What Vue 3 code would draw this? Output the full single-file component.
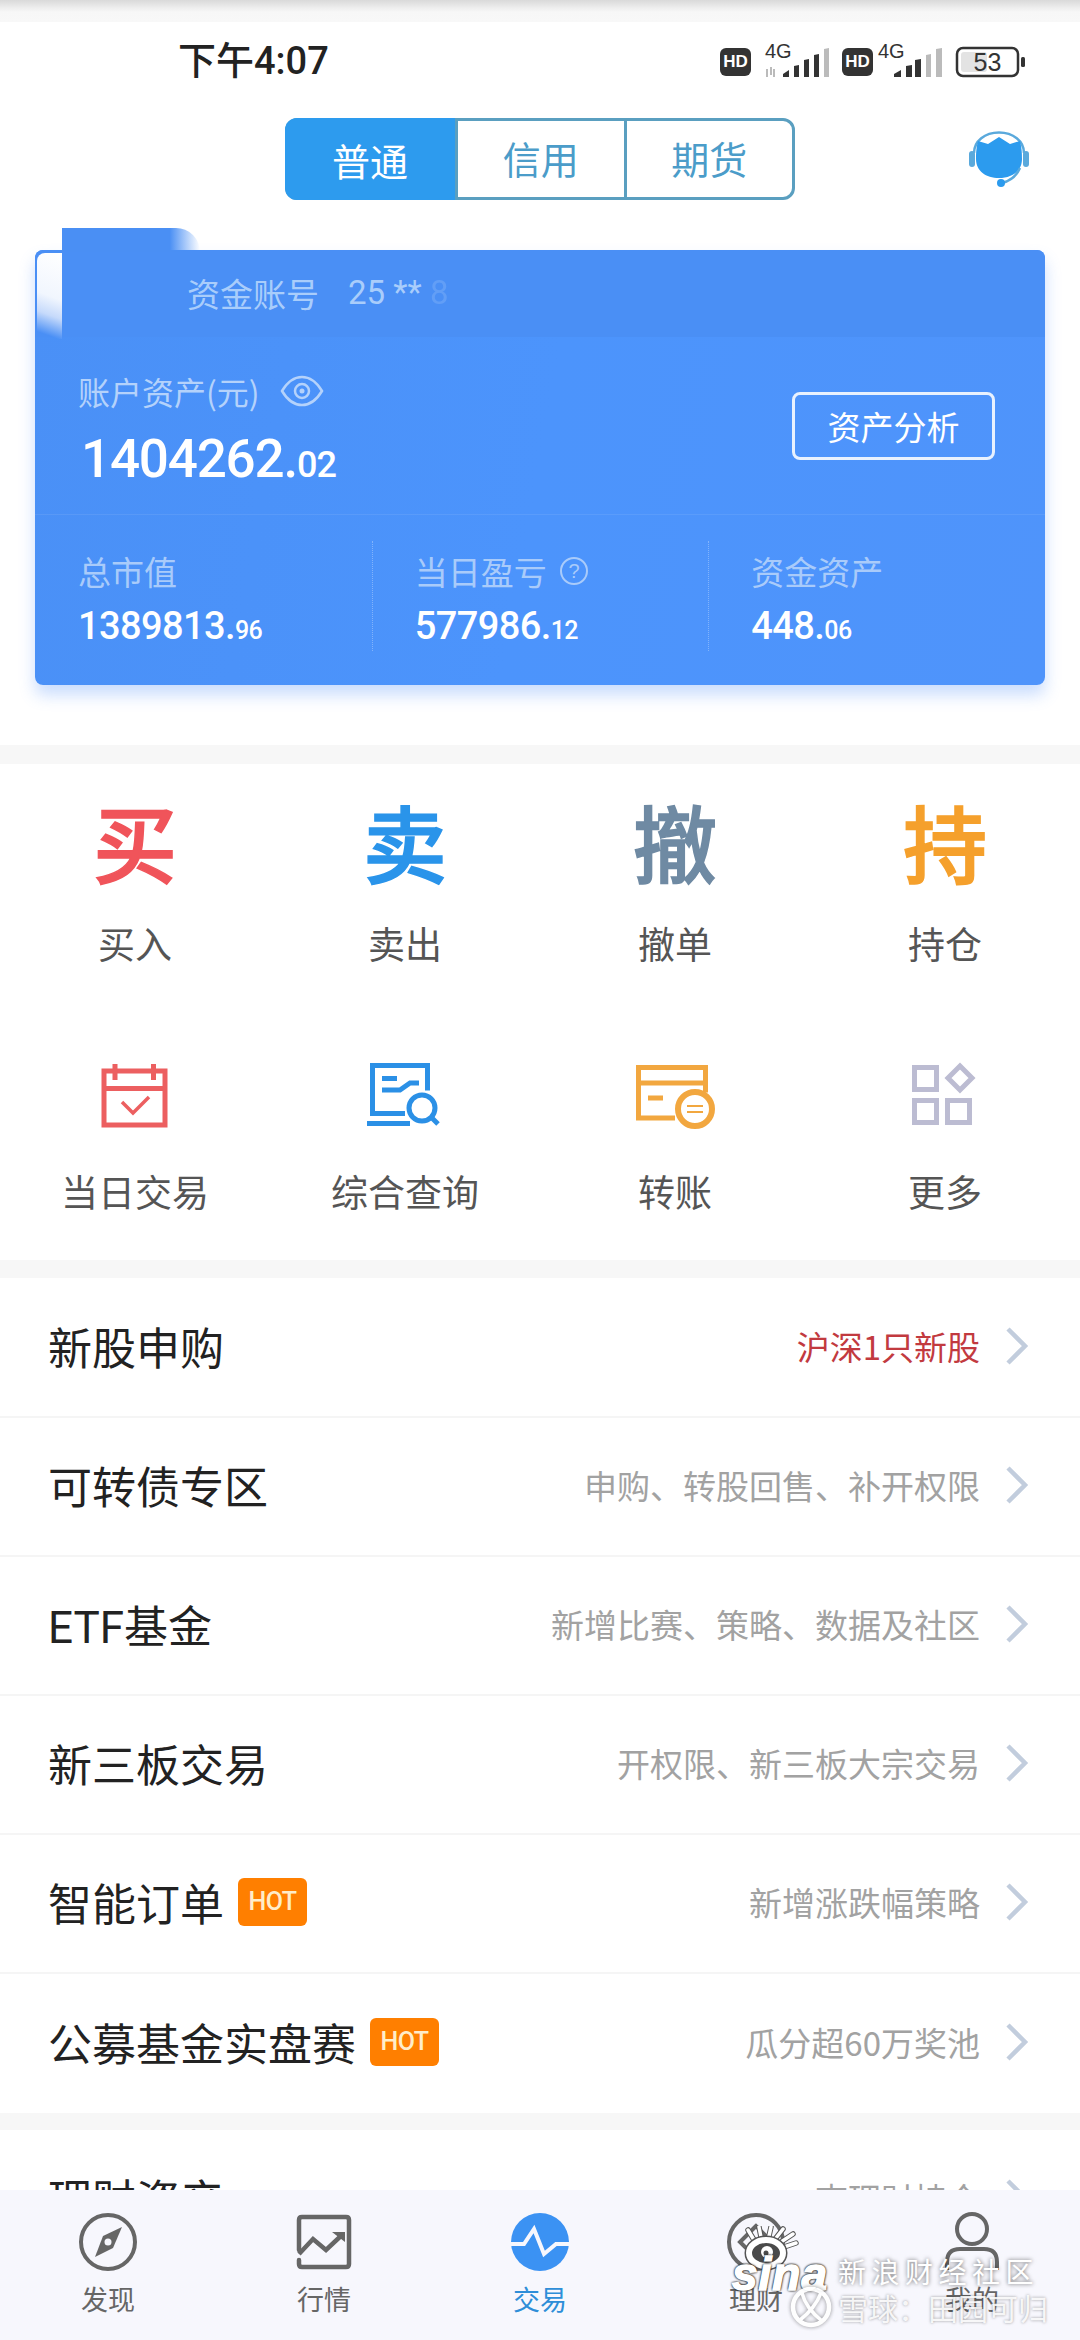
<script setup>
const stats = [
  { label: '总市值', int: '1389813.', dec: '96', help: false },
  { label: '当日盈亏', int: '577986.', dec: '12', help: true },
  { label: '资金资产', int: '448.', dec: '06', help: false }
]
const bigActions = [
  { glyph: '买', label: '买入', tone: 'red' },
  { glyph: '卖', label: '卖出', tone: 'blue' },
  { glyph: '撤', label: '撤单', tone: 'slate' },
  { glyph: '持', label: '持仓', tone: 'orange' }
]
const rows = [
  { title: '新股申购', sub: '沪深1只新股', alert: true },
  { title: '可转债专区', sub: '申购、转股回售、补开权限' },
  { title: 'ETF基金', sub: '新增比赛、策略、数据及社区' },
  { title: '新三板交易', sub: '开权限、新三板大宗交易' },
  { title: '智能订单', sub: '新增涨跌幅策略', hot: true },
  { title: '公募基金实盘赛', sub: '瓜分超60万奖池', hot: true }
]
</script>

<template>
  <div class="phone">
    <div class="top-strip"></div>

    <div class="status">
      <span class="time">下午4:07</span>
      <svg class="status-icons" viewBox="715 35 315 45" width="315" height="45">
        <rect x="719" y="45" width="31" height="28" rx="6" fill="#333" />
        <text x="734.5" y="64" text-anchor="middle" class="hd">HD</text>
        <text x="764" y="55" class="net">4G</text>
        <path d="M766 66v8M770 64v8" stroke="#bbb" stroke-width="2" />
        <path d="M773 66v8" stroke="#bbb" stroke-width="2" />
        <path d="M782 74v-3l6-4v7zM793 74v-11l5-1v12zM803 74v-17l5-1v18zM813 74v-22l5-1v23z" fill="#333" />
        <path d="M823 74v-28l5-1v29z" fill="#bbb" />
        <rect x="841" y="45" width="31" height="28" rx="6" fill="#333" />
        <text x="856.5" y="64" text-anchor="middle" class="hd">HD</text>
        <text x="877" y="55" class="net">4G</text>
        <path d="M893 74v-3l7-4v7zM905 74v-11l6-1v12zM914 74v-17l6-1v18z" fill="#333" />
        <path d="M925 74v-22l5-1v23zM935 74v-28l6-1v29z" fill="#bbb" />
        <rect x="956" y="45" width="61" height="28" rx="6" fill="#fff" stroke="#333" stroke-width="2.5" />
        <rect x="960" y="49" width="26" height="20" rx="3" fill="#e3e3e3" />
        <text x="986.5" y="68" text-anchor="middle" class="batt">53</text>
        <rect x="1020" y="54" width="4" height="10" rx="1.5" fill="#333" />
      </svg>
    </div>

    <div class="header">
      <div class="tabs">
        <span class="tab on">普通</span>
        <span class="tab">信用</span>
        <span class="tab">期货</span>
      </div>
      <svg class="support" viewBox="0 0 62 58" width="62" height="58">
        <path d="M6 22C6 10 17 1.500 31 1.500S56 10 56 22" fill="none" stroke="#5aa9dc" stroke-width="2.500" />
        <rect x="1" y="20" width="6" height="16" rx="3" fill="#5aa9dc" />
        <rect x="55" y="20" width="6" height="16" rx="3" fill="#5aa9dc" />
        <path d="M10 10l10 3 11-7 11 7 10-3c2 8 2 14 2 18 0 12-10 19-23 19S8 40 8 28c0-4 0-10 2-18z" fill="#2c9bee" />
        <path d="M52 37c-4 9-10 13-18 15" fill="none" stroke="#5aa9dc" stroke-width="2.500" />
        <circle cx="33" cy="52" r="4" fill="#2c9bee" />
      </svg>
    </div>

    <section class="card">
      <div class="bump"></div>
      <div class="left-mask"></div>
      <div class="account">
        <span class="account-label">资金账号</span>
        <span class="account-no">25 ** <i class="faded">8</i></span>
      </div>
      <div class="assets">
        <div>
          <div class="assets-label">
            <span>账户资产(元)</span>
            <svg viewBox="0 0 44 32" width="44" height="32">
              <path d="M2 16C8 6 15 2 22 2s14 4 20 14c-6 10-13 14-20 14S8 26 2 16z" fill="none" stroke="#b4d2fb" stroke-width="2.500" />
              <circle cx="22" cy="16" r="7" fill="none" stroke="#b4d2fb" stroke-width="2.500" />
              <circle cx="22" cy="16" r="2.500" fill="#b4d2fb" />
            </svg>
          </div>
          <div class="assets-value">1404262.<small>02</small></div>
        </div>
        <button class="analyse">资产分析</button>
      </div>
      <div class="stats">
        <div v-for="s in stats" :key="s.label" class="stat">
          <div class="stat-label">
            <span>{{ s.label }}</span>
            <svg v-if="s.help" viewBox="0 0 30 30" width="30" height="30">
              <circle cx="15" cy="15" r="13" fill="none" stroke="#a9cbfa" stroke-width="2" />
              <text x="15" y="22" text-anchor="middle" class="help">?</text>
            </svg>
          </div>
          <div class="stat-value">{{ s.int }}<small>{{ s.dec }}</small></div>
        </div>
      </div>
    </section>

    <div class="main">
      <div class="band first"></div>

      <section class="grid">
        <div v-for="a in bigActions" :key="a.label" class="cell">
          <div class="icon-box"><span class="glyph" :class="a.tone">{{ a.glyph }}</span></div>
          <div class="cell-label">{{ a.label }}</div>
        </div>

        <div class="cell">
          <div class="icon-box">
            <svg viewBox="90 1050 90 90" width="90" height="90" fill="none" stroke="#ec5f60" stroke-width="5">
              <rect x="104" y="1071" width="61" height="54" />
              <path d="M104 1088.500h61M115 1064v16M153.500 1064v16" />
              <path d="M122 1102l11 11 16-16" stroke-width="3.500" />
            </svg>
          </div>
          <div class="cell-label">当日交易</div>
        </div>
        <div class="cell">
          <div class="icon-box">
            <svg viewBox="360 1050 90 90" width="90" height="90" fill="none" stroke="#2b90e6" stroke-width="5">
              <path d="M405 1113.500h-32.500v-48h55v25" />
              <path d="M367 1123.500h43" />
              <path d="M382 1078.500h15M382 1090h18l10-7h9" />
              <circle cx="422" cy="1108" r="13" />
              <path d="M431 1117l7 7" />
            </svg>
          </div>
          <div class="cell-label">综合查询</div>
        </div>
        <div class="cell">
          <div class="icon-box">
            <svg viewBox="630 1050 90 90" width="90" height="90" fill="none" stroke="#f2a73f" stroke-width="5">
              <path d="M675 1118h-36.500v-50.500h67v25" />
              <path d="M638.500 1083h67M648 1098h15" />
              <circle cx="695" cy="1109" r="17" stroke-width="6" />
              <path d="M687 1106h16M687 1112h16" stroke-width="2" />
            </svg>
          </div>
          <div class="cell-label">转账</div>
        </div>
        <div class="cell">
          <div class="icon-box">
            <svg viewBox="900 1050 90 90" width="90" height="90" fill="none" stroke="#bcbcd2" stroke-width="5">
              <rect x="914.500" y="1067.500" width="22" height="22" />
              <path d="M960 1066l12 12-12 12-12-12z" />
              <rect x="914.500" y="1100.500" width="22" height="22" />
              <rect x="947.500" y="1100.500" width="22" height="22" />
            </svg>
          </div>
          <div class="cell-label">更多</div>
        </div>
      </section>

      <div class="band"></div>

      <section class="list">
        <div v-for="r in rows" :key="r.title" class="row">
          <span class="row-title">{{ r.title }}</span>
          <span v-if="r.hot" class="hot">HOT</span>
          <span class="row-sub" :class="{ alert: r.alert }">{{ r.sub }}</span>
          <svg class="chev" viewBox="0 0 26 38" width="26" height="38"><path d="M4 2l17 17L4 36" fill="none" stroke="#c2cddd" stroke-width="4.500" /></svg>
        </div>
      </section>

      <div class="band second"></div>

      <div class="row last">
        <span class="row-title">理财资产</span>
        <span class="row-sub">查理财持仓</span>
        <svg class="chev" viewBox="0 0 26 38" width="26" height="38"><path d="M4 2l17 17L4 36" fill="none" stroke="#c2cddd" stroke-width="4.500" /></svg>
      </div>
    </div>

    <nav class="tabbar">
      <div class="nav-item">
        <svg viewBox="0 0 60 60" width="60" height="60">
          <circle cx="30" cy="30" r="27" fill="none" stroke="#666" stroke-width="4" />
          <path d="M44 15L35 36 17 45l8-21z" fill="#666" />
          <circle cx="30" cy="30" r="3.500" fill="#f7f7fd" />
        </svg>
        <span>发现</span>
      </div>
      <div class="nav-item">
        <svg viewBox="0 0 60 60" width="60" height="60" fill="none" stroke="#666" stroke-width="4.500">
          <path d="M5 38V8q0-3 3-3h44q3 0 3 3v44q0 3-3 3H8q-3 0-3-3v-4" stroke-linecap="round" />
          <path d="M5 42l14-15 13 11 17-16" />
          <path d="M38 20h13v10z" fill="#666" stroke="none" />
        </svg>
        <span>行情</span>
      </div>
      <div class="nav-item active">
        <svg viewBox="0 0 60 60" width="60" height="60">
          <circle cx="30" cy="30" r="29" fill="#3b92f3" />
          <path d="M0 32h14l10-15 10 25 12-10h14" fill="none" stroke="#f7f7fd" stroke-width="4" />
        </svg>
        <span>交易</span>
      </div>
      <div class="nav-item">
        <svg viewBox="0 0 60 60" width="60" height="60" fill="none" stroke="#666" stroke-width="4">
          <circle cx="30" cy="30" r="27" />
          <path d="M30 14L14 30l16 16 16-16z" />
        </svg>
        <span>理财</span>
      </div>
      <div class="nav-item">
        <svg viewBox="0 0 60 60" width="60" height="60" fill="none" stroke="#666" stroke-width="4">
          <circle cx="30" cy="17" r="15" />
          <path d="M5 58V50q0-13 13-13h24q13 0 13 13v8" />
        </svg>
        <span>我的</span>
      </div>
    </nav>

    <div class="watermark">
      <svg class="sina-eye" viewBox="0 0 64 44" width="64" height="44" fill="none">
        <path d="M16 14L10 4M23 11L21 1M31 10L33 1M38 12L45 3M43 16L55 8M46 21L58 17" stroke="#555" stroke-width="5.500" stroke-linecap="round" />
        <path d="M16 14L10 4M23 11L21 1M31 10L33 1M38 12L45 3M43 16L55 8M46 21L58 17" stroke="#fff" stroke-width="3.500" stroke-linecap="round" />
        <ellipse cx="28" cy="27" rx="17" ry="13" fill="#4a4a4a" stroke="#555" stroke-width="9" />
        <ellipse cx="28" cy="27" rx="17" ry="13" fill="#4a4a4a" stroke="#fff" stroke-width="6" />
        <circle cx="29" cy="26" r="6" fill="#fff" />
        <circle cx="28" cy="27" r="2.500" fill="#4a4a4a" />
      </svg>
      <span class="sina">sina</span>
      <span class="wm-a">新浪财经社区</span>
      <svg class="xq" viewBox="0 0 44 44" width="44" height="44" fill="none" stroke="#fff" stroke-width="4.500">
        <circle cx="22" cy="22" r="18" />
        <path d="M13 8c3 12 10 20 20 28M32 8C28 18 20 28 11 35" stroke-width="3.500" />
      </svg>
      <span class="wm-b">雪球：田园可归</span>
    </div>
  </div>
</template>

<style>
html, body { margin: 0; background: #fff; }
</style>

<style scoped>
.phone {
  position: relative;
  width: 1080px;
  height: 2340px;
  display: flex;
  flex-direction: column;
  overflow: hidden;
  background: #fff;
  font-family: "Noto Sans CJK SC", "Noto Sans", sans-serif;
  color: #222;
}
.top-strip {
  height: 22px;
  flex: none;
  background: linear-gradient(#d9d9d9 0, #eee 8px, #f7f7f7 12px, #f8f8f8 100%);
}
.status {
  height: 76px;
  flex: none;
  display: flex;
  align-items: center;
  padding: 0 49px 0 178px;
  justify-content: space-between;
  box-sizing: border-box;
}
.time { font: 500 38px/76px "Roboto", "Noto Sans CJK SC", sans-serif; margin-top: 2px; }
.status-icons { display: block; }
.hd { font: 700 17px "Liberation Sans", sans-serif; fill: #fff; }
.net { font: 400 20px "Liberation Sans", sans-serif; fill: #333; }
.batt { font: 400 25px "Liberation Sans", sans-serif; fill: #333; }

.header {
  position: relative;
  margin-top: 20px;
  height: 82px;
  flex: none;
  display: flex;
  justify-content: center;
}
.tabs {
  display: flex;
  width: 510px;
  height: 82px;
  box-sizing: border-box;
  border: 3px solid #5a9fc0;
  border-radius: 12px;
}
.tab {
  flex: 1;
  display: flex;
  align-items: center;
  justify-content: center;
  padding-bottom: 4px;
  font-size: 38px;
  color: #4b9cc9;
  border-left: 3px solid #5a9fc0;
}
.tab.on {
  background: #2d9bee;
  color: #fff;
  border-left: 0;
  margin: -3px 0 -3px -3px;
  flex: 0 0 170px;
  padding-bottom: 0;
  border-radius: 12px 0 0 12px;
}
.support { position: absolute; left: 968px; top: 13px; }

.card {
  position: relative;
  flex: none;
  margin: 50px 35px 0;
  height: 435px;
  border-radius: 8px;
  background: linear-gradient(100deg, #4a90f6, #4c94fc 50%, #4f94fb);
  box-shadow: 0 10px 16px rgba(90, 150, 250, 0.32);
  color: #fff;
}
.bump {
  position: absolute;
  left: 27px;
  top: -22px;
  width: 138px;
  height: 24px;
  background: linear-gradient(to right, #4a8ff4 78%, rgba(74, 143, 244, 0));
  border-top-right-radius: 30px;
}
.left-mask {
  position: absolute;
  left: 2px;
  top: 3px;
  width: 25px;
  height: 86px;
  background: linear-gradient(200deg, #fff 0, #f1f6fe 50%, #c6dafb 70%, rgba(200, 220, 251, 0) 92%);
  border-top-left-radius: 8px;
}
.account {
  height: 87px;
  box-sizing: border-box;
  padding: 0 0 2px 152px;
  display: flex;
  align-items: center;
  background: #4a8ff5;
  border-radius: 8px 8px 0 0;
}
.account-label { font-size: 33px; color: #a9cdfb; }
.account-no { margin-left: 29px; font: 400 33px "Roboto", sans-serif; color: #a9cdfb; }
.faded { font-style: normal; opacity: 0.25; }
.assets {
  height: 178px;
  box-sizing: border-box;
  padding: 36px 50px 0 43px;
  display: flex;
  justify-content: space-between;
  border-bottom: 1px solid rgba(255, 255, 255, 0.08);
}
.assets-label {
  display: flex;
  align-items: center;
  gap: 20px;
  height: 36px;
  font-size: 32px;
  color: #b4d2fb;
}
.assets-value {
  margin-top: 19px;
  font: 500 53px/62px "Roboto", sans-serif;
  letter-spacing: -1.2px;
  padding-left: 3px;
}
.assets-value small { font-size: 36px; letter-spacing: -1px; }
.analyse {
  margin-top: 19px;
  width: 203px;
  height: 68px;
  border: 3px solid #e8f1fe;
  border-radius: 8px;
  background: transparent;
  color: #fff;
  font: 400 33px "Noto Sans CJK SC", sans-serif;
  padding: 0;
}
.stats { display: flex; height: 170px; }
.stat {
  flex: 1;
  position: relative;
  padding: 38px 0 0 43px;
}
.stat + .stat::before {
  content: "";
  position: absolute;
  left: 0;
  top: 26px;
  height: 110px;
  border-left: 1px dotted rgba(255, 255, 255, 0.3);
}
.stat-label {
  display: flex;
  align-items: center;
  gap: 12px;
  height: 36px;
  font-size: 33px;
  color: #a9cbfa;
}
.help { font: 400 20px "Liberation Sans", sans-serif; fill: #a9cbfa; }
.stat-value {
  margin-top: 14px;
  font: 500 38px/46px "Roboto", sans-serif;
  letter-spacing: -0.6px;
}
.stat-value small { font-size: 25px; }

.main { flex: 1; min-height: 0; margin-top: 60px; overflow: hidden; }
.band { height: 18px; background: #f7f7f7; }
.band.first { height: 19px; }
.band.second { height: 17px; }
.list { padding-top: 1px; }
.grid {
  display: grid;
  grid-template-columns: repeat(4, 270px);
  grid-auto-rows: 248px;
}
.cell { padding-top: 41px; text-align: center; box-sizing: border-box; }
.icon-box { height: 84px; display: flex; align-items: center; justify-content: center; }
.icon-box svg { display: block; }
.glyph { font-size: 84px; line-height: 84px; font-weight: 500; margin-top: -12px; -webkit-text-stroke: 1.5px currentColor; }
.red { color: #f0545a; }
.blue { color: #2a94ea; }
.slate { color: #6f8aa3; }
.orange { color: #f5a02c; }
.cell-label { margin-top: 29px; font-size: 37px; line-height: 50px; color: #555; }

.row {
  height: 139px;
  box-sizing: border-box;
  display: flex;
  align-items: center;
  padding: 0 50px 3px 48px;
  border-bottom: 2px solid #f5f5f5;
}
.row:last-child { border-bottom: 0; }
.row-title { font-size: 44px; color: #222; font-family: "Roboto", "Noto Sans CJK SC", sans-serif; }
.hot {
  margin-left: 14px;
  width: 69px;
  height: 48px;
  border-radius: 6px;
  background: #ff7f00;
  color: #ffedc9;
  font: 500 25px/48px "Roboto", sans-serif;
  letter-spacing: -0.5px;
  text-align: center;
}
.row-sub {
  margin-left: auto;
  font-size: 33px;
  color: #a2a2a2;
}
.row-sub.alert { color: #c23a3f; }
.chev { margin-left: 24px; flex: none; }
.last { border-bottom: 0; }

.tabbar {
  flex: none;
  height: 150px;
  display: flex;
  background: #f7f7fd;
}
.nav-item {
  flex: 1;
  display: flex;
  flex-direction: column;
  align-items: center;
  padding-top: 22px;
  font-size: 27px;
  color: #666;
}
.nav-item svg { display: block; }
.nav-item span { margin-top: 9px; line-height: 36px; }
.nav-item.active { color: #2e8ed8; }

.watermark {
  position: absolute;
  left: 725px;
  top: 2225px;
  width: 340px;
  height: 105px;
  color: #fff;
}
.sina-eye { position: absolute; left: 13px; top: 1px; }
.sina {
  position: absolute;
  left: 7px;
  top: 19px;
  font: italic 700 46px/60px "Liberation Sans", sans-serif;
  letter-spacing: 1px;
  -webkit-text-stroke: 1.5px #fff;
  text-shadow: 1px 1px 2px #333, -1px -1px 2px #333, 1px -1px 2px #333, -1px 1px 2px #333;
}
.wm-a {
  position: absolute;
  left: 113px;
  top: 26px;
  font-size: 28px;
  line-height: 40px;
  letter-spacing: 5.500px;
  white-space: nowrap;
  text-shadow: 0 0 4px rgba(0, 0, 0, 0.6);
}
.xq { position: absolute; left: 64px; top: 60px; opacity: 0.92; filter: drop-shadow(0 0 2px rgba(0, 0, 0, 0.45)); }
.wm-b {
  position: absolute;
  left: 113px;
  top: 62px;
  font-size: 30px;
  line-height: 40px;
  white-space: nowrap;
  color: rgba(255, 255, 255, 0.88);
  text-shadow: 0 0 3px rgba(0, 0, 0, 0.4);
}
</style>
